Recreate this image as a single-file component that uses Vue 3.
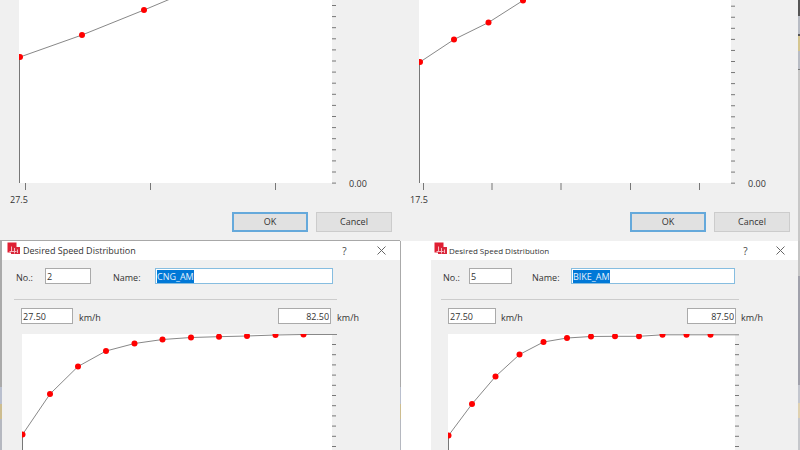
<script setup>
import { ref } from 'vue'

const range = (count, start, step) => Array.from({ length: count }, (_, i) => start + i * step)

const previews = [
  {
    id: 'first',
    view: '0 0 318 190',
    plotWidth: 313,
    origin: '27.5',
    points: [[1, 57], [63, 35], [125, 10], [187, -16]],
    xTicks: [6, 131, 256],
    yTicks: range(17, 5.5, 11.1),
  },
  {
    id: 'second',
    view: '0 0 317 190',
    plotWidth: 312,
    origin: '17.5',
    points: [[1, 62], [35, 39.5], [69.5, 22.5], [104, 0.5], [139, -22]],
    xTicks: [4, 72.5, 141.5, 211, 280],
    yTicks: range(17, 6.2, 11.06),
  },
]

const dialogs = ref([
  {
    id: 'cng',
    no: '2',
    name: 'CNG_AM',
    min: '27.50',
    max: '82.50',
    view: '0 0 315 116',
    plotWidth: 310,
    points: [[0.5, 100.5], [28, 60], [56, 32.5], [84, 17], [112.5, 9.5], [140.5, 5.5], [169, 3.5], [197, 2.7], [225, 2], [253.5, 1], [281.5, 0.5], [315, 0.5]],
    yTicks: range(11, 10.5, 10.2),
  },
  {
    id: 'bike',
    no: '5',
    name: 'BIKE_AM',
    min: '27.50',
    max: '87.50',
    view: '0 0 291 116',
    plotWidth: 287,
    points: [[0.5, 101.5], [24, 70], [47.5, 42.5], [71.5, 20.5], [95.5, 8], [119, 4], [143, 2.5], [167, 2.3], [191, 2.3], [214.5, 0.8], [238.5, 0.8], [262.5, 0.8], [291, 0.8]],
    yTicks: range(11, 10.5, 10.2),
  },
])

const line = (points) => points.map((p) => p.join(',')).join(' ')
</script>

<template>
  <main class="page">
    <div class="row row-top">
      <section v-for="p in previews" :key="p.id" class="preview" :class="p.id">
        <div class="plot-row">
          <svg class="plot" :viewBox="p.view" role="img" aria-label="Speed distribution curve">
            <rect :width="p.plotWidth" height="183" fill="#fff" />
            <polyline class="curve" :points="line(p.points)" />
            <line class="drop" x1="0.5" x2="0.5" :y1="p.points[0][1]" y2="183" />
            <circle v-for="(c, i) in p.points" :key="i" class="dot" :cx="c[0]" :cy="c[1]" r="3" />
            <line v-for="x in p.xTicks" :key="'x' + x" class="tick" :x1="x + 0.5" :x2="x + 0.5" y1="183" y2="190" />
            <line v-for="y in p.yTicks" :key="'y' + y" class="tick" :x1="p.plotWidth" :x2="p.plotWidth + 4" :y1="y" :y2="y" />
          </svg>
          <span class="zero">0.00</span>
        </div>
        <div class="origin">{{ p.origin }}</div>
        <div class="actions">
          <button type="button" class="btn primary">OK</button>
          <button type="button" class="btn">Cancel</button>
        </div>
      </section>
      <div class="edge edge-top"></div>
    </div>

    <div class="row row-bottom">
      <section v-for="d in dialogs" :key="d.id" class="dialog" :class="d.id">
        <header class="titlebar">
          <svg class="logo" viewBox="0 0 13 13" aria-hidden="true">
            <rect x="0.5" y="0.5" width="9" height="10" fill="#e01f33" />
            <rect x="4" y="5" width="9" height="7" fill="#d9273a" />
            <path d="M2.5 9.5h7M4.5 4.5v5M7.5 6v5.5M10.5 7.5v3.500" stroke="#f6b9c0" fill="none" />
          </svg>
          <h2>Desired Speed Distribution</h2>
          <button type="button" class="tool help" aria-label="Help">?</button>
          <button type="button" class="tool" aria-label="Close">
            <svg viewBox="0 0 9 9" width="9" height="9"><path d="M0.500 0.500l8 8M8.500 0.500l-8 8" stroke="#666" fill="none" /></svg>
          </button>
        </header>
        <div class="body">
          <div class="ident">
            <label :for="d.id + '-no'">No.:</label>
            <input :id="d.id + '-no'" v-model="d.no" class="field" size="1" />
            <label class="name-label" :for="d.id + '-name'">Name:</label>
            <span class="field name-box">
              <input :id="d.id + '-name'" v-model="d.name" class="selected" size="4" />
            </span>
          </div>
          <hr />
          <div class="limits">
            <input :id="d.id + '-min'" v-model="d.min" class="field" size="1" />
            <label :for="d.id + '-min'">km/h</label>
            <input :id="d.id + '-max'" v-model="d.max" class="field upper" size="1" />
            <label :for="d.id + '-max'">km/h</label>
          </div>
          <svg class="plot" :viewBox="d.view" role="img" aria-label="Speed distribution curve">
            <rect :width="d.plotWidth" height="116" fill="#fff" />
            <polyline class="curve" :points="line(d.points)" />
            <line class="drop" x1="0.5" x2="0.5" :y1="d.points[0][1]" y2="116" />
            <circle v-for="(c, i) in d.points.slice(0, -1)" :key="i" class="dot" :cx="c[0]" :cy="c[1]" r="3" />
            <line v-for="y in d.yTicks" :key="y" class="tick" :x1="d.plotWidth" :x2="d.plotWidth + 4" :y1="y" :y2="y" />
          </svg>
        </div>
      </section>
      <div class="edge edge-bottom"></div>
    </div>
  </main>
</template>

<style>
body {
  background: #fff;
}
</style>

<style scoped>
.page {
  font-family: "Open Sans", "Noto Sans", sans-serif;
  font-size: 9px;
  line-height: 12px;
  color: #333;
}
.row {
  display: flex;
}
.row-top {
  background: #f0f0f0;
}
.preview {
  flex: 400 1 0;
  min-width: 0;
  padding-bottom: 8px;
  border-bottom: 1px solid #a8a8a8;
}
.preview.second {
  flex-grow: 398;
  border-bottom-color: #f0f0f0;
}
.plot-row {
  display: flex;
  align-items: flex-end;
  gap: 12px;
  padding-left: 19px;
}
.plot {
  display: block;
  flex: 1;
  min-width: 0;
}
.zero {
  width: 51px;
}
.second .zero {
  width: 50px;
}
.origin {
  padding: 4px 10px 6px;
}
.curve {
  fill: none;
  stroke: #888;
}
.drop {
  stroke: #777;
}
.dot {
  fill: #f00;
}
.tick {
  stroke: #777;
}
.actions {
  display: flex;
  justify-content: flex-end;
  gap: 8px;
  padding-right: 8px;
}
.btn {
  width: 76px;
  height: 20px;
  padding: 0;
  border: 1px solid #ccc;
  background: #e1e1e1;
  font: inherit;
  color: #333;
}
.btn.primary {
  border: 2px solid #65a9db;
}
.edge {
  width: 2px;
}
.edge-top {
  background: linear-gradient(#555 0 16px, #b8bcc4 16px 34px, #555 34px 36px, #d5c68f 36px 51px, #b8bcc4 51px 69px, #777 69px 70px, #c8c8c8 70px);
}
.edge-bottom {
  background: linear-gradient(#c4c4c4 0 35px, #a0a1ab 35px 144px, #c3c6ce 144px 162px, #dfd1b0 162px 177px, #c6c8cc 177px);
}
.row-bottom {
  display: grid;
  grid-template-columns: 401fr 30px 367fr 2px;
}
.dialog {
  min-width: 0;
}
.cng {
  border-right: 1px solid #999;
  border-left: 2px solid;
  border-image: linear-gradient(#aaa 0 145px, #b9bfce 145px 162px, #cdbd8f 162px 177px, #b5b8c0 177px) 2;
  border-top: 0;
  border-bottom: 0;
}
.bike {
  grid-column: 3;
}
.titlebar {
  display: flex;
  align-items: center;
  height: 19px;
  padding-left: 5px;
  background: #fff;
}
.bike .titlebar {
  padding-left: 3px;
}
.logo {
  width: 13px;
  height: 13px;
  margin: 0 3px 4px 0;
}
.bike .logo {
  margin-right: 2px;
}
.titlebar h2 {
  flex: 1;
  margin: 0;
  font-size: 9px;
  font-weight: 400;
}
.bike h2 {
  font-size: 8px;
}
.tool {
  display: flex;
  align-items: center;
  justify-content: center;
  width: 37px;
  height: 18px;
  padding: 0;
  border: 0;
  background: none;
  font: inherit;
  font-size: 10px;
  color: #444;
}
.bike .tool {
  width: 35px;
}
.body {
  padding: 8px 63px 0 12px;
  background: #f0f0f0;
}
.bike .body {
  padding: 8px 59px 0 10px;
}
.ident {
  display: grid;
  align-items: end;
  padding: 0 4px 0 2px;
}
.cng .ident {
  grid-template-columns: 29px 46px 22px 42px 1fr;
}
.bike .ident {
  grid-template-columns: 26px 43px 20px 39px 1fr;
}
.ident .name-label {
  grid-column: 4;
}
.field {
  box-sizing: border-box;
  min-width: 0;
  height: 16px;
  padding: 0 1px;
  border: 1px solid #aaa;
  border-radius: 0;
  outline: 0;
  background: #fff;
  font: inherit;
  color: #333;
}
.name-box {
  display: flex;
  align-items: center;
  border-color: #86bde0;
}
.selected {
  field-sizing: content;
  height: 13px;
  padding: 0;
  border: 0;
  outline: 0;
  background: #0078d7;
  font: inherit;
  color: #e4f1fc;
}
hr {
  height: 1px;
  margin: 15px 0 8px;
  border: 0;
  background: #ccc;
}
.limits {
  display: grid;
  grid-template-columns: 52px 1fr 53px auto;
  align-items: end;
  gap: 6px;
  margin: 0 -22px 10px 7px;
}
.bike .limits {
  grid-template-columns: 48px 1fr 49px auto;
  gap: 5px;
  margin-right: -24px;
}
.upper {
  text-align: right;
}
.body .plot {
  margin-left: 8px;
}
.bike .plot {
  margin-left: 7px;
}
</style>
